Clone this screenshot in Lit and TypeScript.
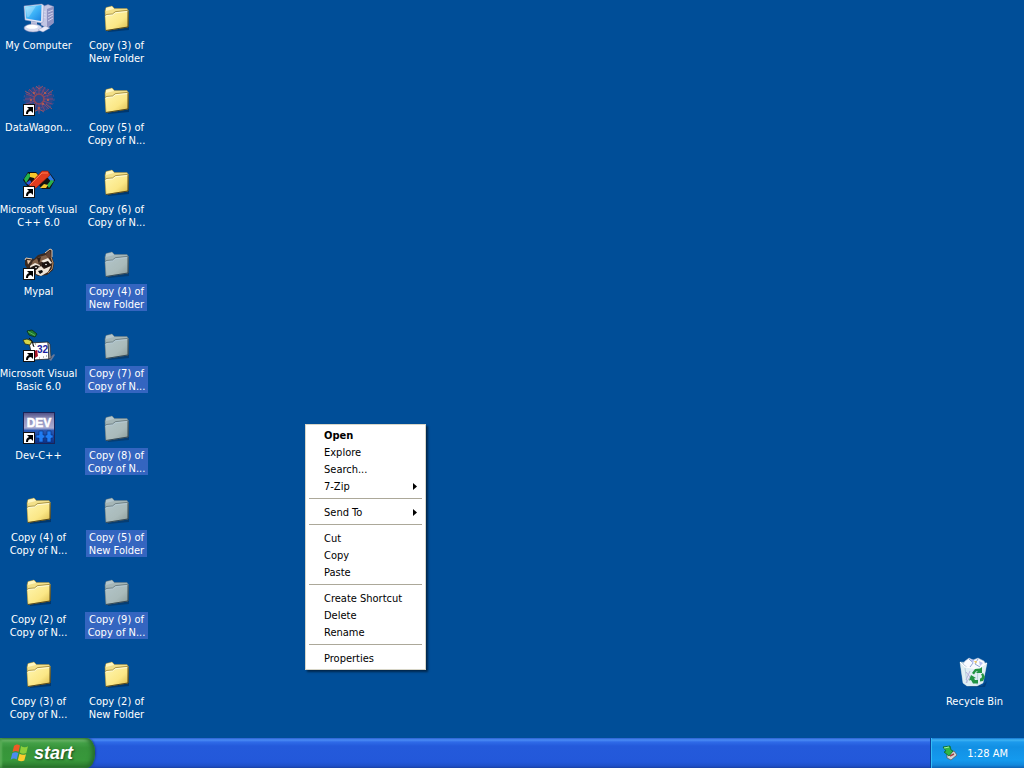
import { LitElement, html, css, svg, nothing } from "lit";
import { customElement, property } from "lit/decorators.js";
import { classMap } from "lit/directives/class-map.js";

const shortcutArrow = svg`
  <rect x="0.5" y="20.5" width="11" height="11" fill="#fff" stroke="#111" />
  <path d="M4 23h6v6l-2-2c-2 0-3 1-3 3H3c0-3 1-4 3-5z" fill="#000" />`;

const folder = svg`
  <path d="M8 10l21 1v17L8 30z" fill="#001c3c" opacity=".45" />
  <path d="M5 9l1-3.500 6-1.500 2.500 2.500L27 6.500 28 8v17L6 28.500z" fill="#f3e089" stroke="#a98f3c" stroke-width=".5" />
  <path d="M6 6l6-1.500 2 2.500-8 2z" fill="#fff6bf" />
  <path d="M5 14l1.500-1 6-.5 3-2.500L28.500 8.500 28 25 6 28.500z" fill="url(#folder-front)" stroke="#8b7a2e" stroke-width=".4" />
  <path d="M5.500 13.200l1.500-.8 5.500-.5 3-2.300L28 8.300" fill="none" stroke="#a08a3c" stroke-width=".8" />
  <path d="M5.500 14.300l1.500-.8 5.500-.5 3-2.300L28 9.500" fill="none" stroke="#fffbd8" />
  <path d="M28 9v16L6 28.500" fill="none" stroke="#4c4018" stroke-width=".9" />`;

const art: Record<string, unknown> = {
  folder: svg`
    <defs><linearGradient id="folder-front" x1="0" y1="0" x2="1" y2="1">
      <stop offset="0" stop-color="#fff6b0" /><stop offset=".6" stop-color="#fbe786" /><stop offset="1" stop-color="#d9b94a" />
    </linearGradient></defs><g transform="translate(-1 0)">${folder}</g>`,
  computer: svg`
    <defs><linearGradient id="screen" x1="0" y1="0" x2="1" y2="1">
      <stop offset="0" stop-color="#9be6ff" /><stop offset=".5" stop-color="#3eb4f8" /><stop offset="1" stop-color="#1a82e0" />
    </linearGradient></defs>
    <g transform="translate(-1 1)">
      <path d="M19 4l7-2.500 5.500 2V20L25 25l-6-3z" fill="#c3c6e4" stroke="#7a7fae" stroke-width=".5" />
      <path d="M25 6l6.500-2.500V20L25 25z" fill="#8f93c2" />
      <path d="M20 8l4 1M20 11l4 1M20 14l4 1M26 9l5-2M26 12l5-2M26 15l5-3M26 18l5-3" stroke="#dcdff4" stroke-width=".8" />
      <path d="M2 3l18-2 2 1.500L21 19l-2 1L3 17z" fill="#dfe4f5" stroke="#8790bd" stroke-width=".5" />
      <path d="M3 3.500L19.500 2 19 18 4 15.500z" fill="url(#screen)" />
      <path d="M4 4.500L14 3 7 14l-2-.3z" fill="#fff" opacity=".25" />
      <path d="M9 18l6 1v4H9z" fill="#b9bddb" />
      <ellipse cx="11" cy="25" rx="9" ry="4" fill="#d7dbef" stroke="#8085b0" stroke-width=".5" />
      <ellipse cx="10" cy="23.800" rx="6" ry="2" fill="#fff" />
      <path d="M16 27l7-4 5 2-7 4z" fill="#e8e9f8" stroke="#8c90ba" stroke-width=".4" />
    </g>`,
  wagon: svg`
    <ellipse cx="16" cy="15" rx="14" ry="12" fill="#6d4478" opacity=".4" />
    <g fill="none" stroke="#8f4570" stroke-width="1" opacity=".8" transform="translate(-1 0)">
      <circle cx="17" cy="15" r="5" stroke="#b2483f" stroke-width="1.600" /><circle cx="17" cy="15" r="9" stroke-dasharray="2 1.500" />
      <ellipse cx="17" cy="15" rx="15" ry="12" stroke="#745083" stroke-dasharray="2 2" />
      <path d="M17 1v9M17 20v10M3 15h9M22 15h9M7 5l6 6M27 5l-6 6M7 25l6-6M27 25l-6-6M11 3l4 8M23 3l-4 8M11 27l4-8M23 27l-4-8M4 10l9 3M30 10l-9 3M4 20l9-3M30 20l-9-3" />
      <path d="M3 7l5 3M26 10l5-4M4 24l6-4M24 20l6 5M14 2l3 3 4-3M12 28l5-3 5 3" stroke="#b35458" />
    </g>
    <g fill="#c46247"><circle cx="11" cy="9" r="1" /><circle cx="22" cy="9" r="1" /><circle cx="8" cy="16" r="1" /><circle cx="25" cy="16" r="1" /><circle cx="16" cy="24" r="1" /><circle cx="20" cy="20" r="1" /></g>
    ${shortcutArrow}`,
  vc: svg`
    <path d="M0 14L5 6h8l6 7-5 8H5z" fill="#111" /><path d="M13 15l6-9h7l6 8-5 9h-8z" fill="#111" />
    <path d="M1 13l4-6 3 2-3 5-2 3z" fill="#25b34a" /><path d="M7 7h6l5 5-4 5-3-5-4-1z" fill="#f6c72c" />
    <path d="M3 17l4-3 3 5-3 1z" fill="#2d59d8" /><path d="M20 7h5l2 3-3 2-4-1z" fill="#f6c72c" />
    <path d="M26 7l5 7-2 3-4-5z" fill="#2d7be8" /><path d="M31 15l-5 7-2-3 4-5z" fill="#2bb14b" />
    <path d="M17 22h6l2-3-4-1z" fill="#f6c72c" />
    <path d="M6 19L19 5h6l2 4-14 13H8z" fill="#e13c1e" stroke="#851b0d" stroke-width=".6" />
    <path d="M7 19L19 7h6" fill="none" stroke="#ff7b50" />
    ${shortcutArrow}`,
  raccoon: svg`
    <path d="M2 13l1-3 8 1 4-4 7-2 5-4 2 1v7l2 6-1 7-6 5-9 1-9-5-4-6z" fill="#3a2920" />
    <path d="M2 12l1-2 6 1M22 5l5-4 2 1v7" fill="none" stroke="#e7c7aa" />
    <path d="M23 6l4-3.500 1 6-3 2z" fill="#5f4132" /><path d="M4 12l4 .5-3 4z" fill="#e7c7aa" />
    <path d="M10 13l6-4 7-2 4 5-9 2-6 4-5 1z" fill="#80614a" />
    <path d="M14 10l2 6 2-7z" fill="#2a1c16" />
    <path d="M7 18l5-3 5 2-2 5-6 1z" fill="#f2eadf" /><path d="M18 13l7-3 4 5-5 2z" fill="#f2eadf" />
    <path d="M8 19l5-2 3 1-1 4-6 1z" fill="#1a1210" /><path d="M19 15l6-2 3 4-5 3-4-1z" fill="#1a1210" />
    <path d="M13 22l5-4 3 3 7-3-3 6-7 4-5-2z" fill="#f1e6d8" />
    <path d="M15 23l4-1 1 2-3 2z" fill="#0a0808" /><path d="M28 9l2 6-1 6-4 4" fill="none" stroke="#b88d64" />
    <circle cx="13" cy="19.500" r=".8" fill="#fff" /><circle cx="23" cy="16.500" r=".8" fill="#fff" />
    ${shortcutArrow}`,
  vb: svg`
    <path d="M25 29l6-5 1 1-4 6z" fill="#667799" />
    <path d="M6 13l19-1 1 17-16 1z" fill="#fff" stroke="#222" stroke-width=".8" />
    <path d="M25 12l2 2 1 14-2 1z" fill="#b5b5b5" stroke="#222" stroke-width=".6" />
    <path d="M9 15h1M12 14h1M20 27h1M23 26h1M16 28h1" stroke="#777" />
    <text x="14" y="23" font-family="Liberation Sans, sans-serif" font-weight="700" font-size="10" fill="#1b1f9e">32</text>
    <path d="M4 1l5-1 5 4-2 3-6-2z" fill="#1f7a2f" stroke="#0c2e14" stroke-width=".8" /><path d="M5 1.500l7 4" stroke="#69c16c" stroke-width=".8" />
    <path d="M0 10l4-1 5 2-2 4-5-1z" fill="#d6d64a" stroke="#28300c" stroke-width=".8" /><path d="M6 8l3 3 2 6" fill="none" stroke="#111" />
    <path d="M11 21l3-1 1 6-3 2z" fill="#a81226" />
    ${shortcutArrow}`,
  dev: svg`
    <defs><linearGradient id="dev-bg" x1="0" y1="0" x2="0" y2="1">
      <stop offset="0" stop-color="#4c4d84" /><stop offset=".2" stop-color="#8f8fba" /><stop offset=".5" stop-color="#a9abd0" /><stop offset=".58" stop-color="#2a5ab4" /><stop offset="1" stop-color="#0a2f84" />
    </linearGradient></defs>
    <rect x=".5" y=".5" width="31" height="31" fill="url(#dev-bg)" stroke="#1a2458" />
    <text x="16" y="15" text-anchor="middle" font-family="Liberation Sans, sans-serif" font-weight="700" font-size="12" fill="#fff" stroke="#fff" stroke-width=".5">DEV</text>
    <path d="M13 23h3v-4h4v4h2v3h-2v4h-4v-4h-3zM22 23h2v-4h4v4h2v3h-2v4h-4v-4h-2z" fill="#1f7cf4" stroke="#06307c" stroke-width=".6" />
    ${shortcutArrow}`,
  bin: svg`
    <g transform="translate(-1 -2)">
      <path d="M10 28l14 2 5-5-2 6H12z" fill="#00204a" opacity=".35" />
      <path d="M2 6l27 1-4 20-6 3H9l-4-3z" fill="#c9e0ea" stroke="#87a9bd" stroke-width=".6" />
      <path d="M7 5l4-3 4 2 5-2 6 3 2 4-8 4-10-1-5-4z" fill="#f8fbff" stroke="#a7b6d0" stroke-width=".5" />
      <path d="M11 3l4 4-3 4M20 3l-3 5 5 3" fill="none" stroke="#8ea4d0" />
      <path d="M12 3l4 1-1 4zM21 5l4 2-3 3z" fill="#b6bff0" /><path d="M16 5l3 0-1 3z" fill="#f0c96a" />
      <path d="M2 6l5 5 13 2 9-6-4 20-6 3H9l-4-3z" fill="#e2f0f4" opacity=".88" />
      <path d="M7 12l2 15M20 13l-1 16" stroke="#b7cfdb" /><path d="M2 6l5 5 13 2 9-6" fill="none" stroke="#fff" />
      <path d="M8 16l4 5-4 6M12 15l-4 9" stroke="#b8b2dc" fill="none" />
      <g fill="#229444"><path d="M14 17l3-4 5-.5 2-1.500v6h-6l2-2-2 .5-2 3z" /><path d="M25 17l2 4-2 4-3 .5v-3l1.500-.5.5-2-1-1.500z" /><path d="M13 19l5 3-2 .6 1 1.400h3v3.500h-5l-2-3.500-2 .5z" /></g>
    </g>`,
};

@customElement("desktop-icon")
export class DesktopIcon extends LitElement {
  @property() kind = "folder";
  @property({ type: Array }) lines: string[] = [];
  @property({ type: Boolean }) selected = false;

  static styles = css`
    :host { display: block; }
    .icon {
      display: flex; flex-direction: column; align-items: center; gap: 4px;
      width: 100%; padding: 2px 0 0; border: 0; background: none;
      color: #fff; font: inherit; line-height: 13px; white-space: nowrap;
    }
    .glyph { display: block; width: 32px; height: 32px; overflow: visible; }
    .selected .glyph { filter: grayscale(0.7) sepia(0.1); opacity: 0.7; }
    .label { padding: 1px 3px 0; }
    .line { display: block; }
    .selected .label { background: #3465c0; }
  `;

  render() {
    return html`
      <button class=${classMap({ icon: true, selected: this.selected })} aria-pressed=${this.selected}>
        <svg class="glyph" viewBox="0 0 32 32" aria-hidden="true">${art[this.kind]}</svg>
        <span class="label">${this.lines.map((l) => html`<span class="line">${l}</span>`)}</span>
      </button>`;
  }
}

interface MenuEntry { text: string; main?: boolean; sub?: boolean; }

@customElement("context-menu")
export class ContextMenu extends LitElement {
  groups: MenuEntry[][] = [
    [{ text: "Open", main: true }, { text: "Explore" }, { text: "Search..." }, { text: "7-Zip", sub: true }],
    [{ text: "Send To", sub: true }],
    [{ text: "Cut" }, { text: "Copy" }, { text: "Paste" }],
    [{ text: "Create Shortcut" }, { text: "Delete" }, { text: "Rename" }],
    [{ text: "Properties" }],
  ];

  static styles = css`
    :host {
      display: block; box-sizing: border-box; width: 121px; padding: 2px 3px;
      background: #fff; border: 1px solid #d8d6c8;
      box-shadow: 2px 2px 2px rgba(0, 0, 0, 0.5);
    }
    .item {
      display: flex; align-items: center; justify-content: space-between;
      width: 100%; height: 17px; padding: 0 5px 0 15px; border: 0; background: none;
      color: #000; font: inherit; line-height: 17px; white-space: nowrap;
    }
    .main { font-weight: 700; }
    .item:hover { background: #316ac5; color: #fff; }
    .arrow { width: 4px; height: 7px; fill: currentColor; }
    .rule { height: 1px; margin: 3px 0 5px; border: 0; background: #aca899; }
  `;

  render() {
    return this.groups.map((group, i) => html`
      ${i ? html`<hr class="rule" />` : nothing}
      ${group.map((e) => html`
        <button role="menuitem" class=${classMap({ item: true, main: !!e.main })}>
          <span>${e.text}</span>
          ${e.sub ? html`<svg class="arrow" viewBox="0 0 4 7" aria-hidden="true"><path d="M0 0l4 3.500L0 7z" /></svg>` : nothing}
        </button>`)}`);
  }
}

@customElement("task-bar")
export class TaskBar extends LitElement {
  static styles = css`
    :host {
      display: flex; justify-content: space-between; height: 30px;
      background: linear-gradient(#2a5fd0 0, #4a8cf4 2px, #2f6be8 4px, #245adb 8px, #2358da 24px, #1f4fc8 28px, #1941a5 30px);
    }
    .start {
      display: flex; align-items: center; gap: 4px; padding: 0 22px 0 10px; border: 0;
      border-radius: 0 9px 9px 0 / 0 14px 14px 0; color: #fff;
      background: linear-gradient(#3a8a3a 0, #6fba6c 2px, #43a047 5px, #37943a 10px, #38983b 22px, #2f8332 27px, #256b28 30px);
      box-shadow: inset -3px 0 4px #256d2a, inset 2px 0 2px #5aae58, 1px 0 2px #1b3f9a;
      font: italic 700 18px "Liberation Sans", Arial, sans-serif; text-shadow: 1px 1px 2px #1c4a1e;
    }
    .flag { width: 20px; height: 20px; }
    .tray {
      display: flex; align-items: center; gap: 10px; padding: 0 16px 0 11px;
      border-left: 1px solid #0d3f99; box-shadow: inset 1px 0 0 #33bdf5;
      background: linear-gradient(#1273d0 0, #3fb4f4 2px, #1c9aec 4px, #1290e4 9px, #149aee 22px, #1288dc 27px, #0d62b4 30px);
      color: #fff;
    }
    .device { width: 15px; height: 16px; }
  `;

  render() {
    return html`
      <button class="start">
        <svg class="flag" viewBox="0 0 20 20" aria-hidden="true">
          <path d="M4 3c2-2 4-2 6-.5L8.500 9C6.500 7.500 4.500 8 2.500 9z" fill="#ee5a25" />
          <path d="M11 3c2 1.500 5 1.500 7 .3L16.300 10c-2 1-4.500 1-6.500-.5z" fill="#8ccf3b" />
          <path d="M2.300 10.200c2-1.300 4-1.300 6-.2L6.700 16.500c-2-1.300-4-1.300-6 .2z" fill="#4b8cf0" />
          <path d="M9.500 10.800c2 1.300 4.500 1.300 6.500.4L14.300 17.500c-2 1.200-4.500 1-6.500-.3z" fill="#fbcc2e" />
        </svg>
        <span>start</span>
      </button>
      <div class="tray">
        <svg class="device" viewBox="0 0 15 16" aria-hidden="true">
          <path d="M5 9l7-3 3 4-6 5-4-2z" fill="#d5d5d5" stroke="#555" stroke-width=".7" />
          <path d="M8 11l4-2" stroke="#a54040" stroke-width="1.500" />
          <path d="M1 2l7-1 1 4 2 1-4 5-5-4 2-1z" fill="#2fb545" stroke="#0e6a22" stroke-width=".8" />
          <path d="M2 3l5-1" stroke="#a1f0a2" />
        </svg>
        <time>1:28 AM</time>
      </div>`;
  }
}

interface Shortcut { kind: string; lines: string[]; selected?: boolean; }

const copy = (n: number, of: "New Folder" | "Copy of N...", selected = false): Shortcut => ({
  kind: "folder",
  lines: [`Copy (${n}) of`, of],
  selected,
});

@customElement("app-root")
export class AppRoot extends LitElement {
  icons: Shortcut[] = [
    { kind: "computer", lines: ["My Computer"] },
    { kind: "wagon", lines: ["DataWagon..."] },
    { kind: "vc", lines: ["Microsoft Visual", "C++ 6.0"] },
    { kind: "raccoon", lines: ["Mypal"] },
    { kind: "vb", lines: ["Microsoft Visual", "Basic 6.0"] },
    { kind: "dev", lines: ["Dev-C++"] },
    copy(4, "Copy of N..."), copy(2, "Copy of N..."), copy(3, "Copy of N..."),
    copy(3, "New Folder"), copy(5, "Copy of N..."), copy(6, "Copy of N..."),
    copy(4, "New Folder", true), copy(7, "Copy of N...", true), copy(8, "Copy of N...", true),
    copy(5, "New Folder", true), copy(9, "Copy of N...", true), copy(2, "New Folder"),
  ];

  static styles = css`
    :host {
      display: flex; flex-direction: column; height: 100vh; overflow: hidden;
      background: #004e98; font: 11px Tahoma, "DejaVu Sans Condensed", "Noto Sans", sans-serif;
    }
    .desktop { position: relative; flex: 1; min-height: 0; display: flex; justify-content: space-between; }
    .icons {
      display: grid; grid-auto-flow: column; grid-template-rows: repeat(auto-fill, 82px);
      grid-auto-columns: 77px; column-gap: 1px;
    }
    .bin { align-self: flex-end; width: 77px; height: 82px; margin-right: 11px; }
    .menu { position: absolute; left: 305px; top: 424px; }
  `;

  render() {
    return html`
      <main class="desktop">
        <div class="icons">
          ${this.icons.map((i) => html`<desktop-icon .kind=${i.kind} .lines=${i.lines} .selected=${!!i.selected}></desktop-icon>`)}
        </div>
        <desktop-icon class="bin" .kind=${"bin"} .lines=${["Recycle Bin"]}></desktop-icon>
        <context-menu class="menu" role="menu"></context-menu>
      </main>
      <task-bar></task-bar>`;
  }
}
